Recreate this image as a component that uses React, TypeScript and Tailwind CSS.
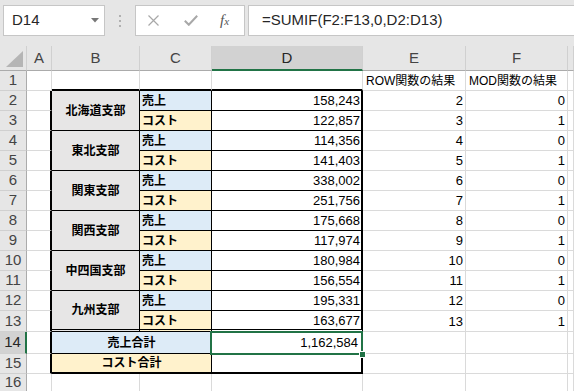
import { Fragment } from "react";

const branches = [
  { name: "北海道支部", sales: "158,243", cost: "122,857" },
  { name: "東北支部", sales: "114,356", cost: "141,403" },
  { name: "関東支部", sales: "338,002", cost: "251,756" },
  { name: "関西支部", sales: "175,668", cost: "117,974" },
  { name: "中四国支部", sales: "180,984", cost: "156,554" },
  { name: "九州支部", sales: "195,331", cost: "163,677" },
];

// plain sheet cells
const plain = "border-r border-b border-[#dadada]";
const num =
  "flex items-end justify-end border-r border-b border-[#dadada] pr-[2px] pb-[1px] text-[13px] leading-[16px]";
const label =
  "flex items-end overflow-hidden whitespace-nowrap border-r border-b border-[#dadada] pl-[3px] pb-[1px] text-[12px] leading-[16px]";

// table cells
const topEdge = "border-r border-b-2 border-r-[#dadada] border-b-black";
const leftEdge = "border-r-2 border-b border-r-black border-b-[#dadada]";
const branchCell =
  "row-span-2 flex items-center justify-center border-r border-b border-black bg-[#e7e6e6] text-[12px] font-bold";
const branchLast =
  "row-span-2 flex items-center justify-center border-r border-b-[3px] border-double border-black bg-[#e7e6e6] text-[12px] font-bold";
const salesCell =
  "flex items-end border-r border-b border-black bg-[#ddebf7] pl-[2px] pb-[1px] text-[12px] leading-[16px] font-bold";
const costCell =
  "flex items-end border-r border-b border-black bg-[#fff2cc] pl-[2px] pb-[1px] text-[12px] leading-[16px] font-bold";
const costLast =
  "flex items-end border-r border-b-[3px] border-double border-black bg-[#fff2cc] pl-[2px] text-[12px] leading-[16px] font-bold";
const valueCell =
  "flex items-end justify-end border-r-2 border-b border-black pr-[1px] pb-[1px] text-[13px] leading-[16px]";
const valueLast =
  "flex items-end justify-end border-r-2 border-b-[3px] border-double border-black pr-[1px] text-[13px] leading-[16px]";

const RowHead = ({ n, active }: { n: number; active?: boolean }) =>
  active ? (
    <div className="flex items-center justify-center border-r-2 border-b border-r-[#217346] border-b-[#d0d0d0] bg-[#d2d2d2] text-[15px] text-[#262626]">
      {n}
    </div>
  ) : (
    <div className="flex items-center justify-center border-r border-b border-r-[#ababab] border-b-[#d0d0d0] bg-[#e6e6e6] text-[15px] text-[#444]">
      {n}
    </div>
  );

const Toolbar = () => (
  <div className="flex h-[46px] items-start bg-[#e6e6e6] pt-[5px]">
    <div className="ml-[3px] flex h-[31px] w-[102px] items-center justify-between border border-[#c6c6c6] bg-white pl-[8px] pr-[5px] text-[15px] text-[#262626]">
      D14
      <svg width="8" height="5" viewBox="0 0 8 5">
        <polygon points="0,0 8,0 4,4.5" fill="#777" />
      </svg>
    </div>
    <div className="flex h-[31px] w-[30px] flex-col items-center justify-center gap-[3px]">
      <span className="h-[2px] w-[2px] bg-[#b0b0b0]" />
      <span className="h-[2px] w-[2px] bg-[#b0b0b0]" />
      <span className="h-[2px] w-[2px] bg-[#b0b0b0]" />
    </div>
    <div className="flex h-[31px] w-[110px] items-center border border-[#c6c6c6] bg-white pl-[12px]">
      <svg width="11" height="11" viewBox="0 0 11 11">
        <path d="M0.5 0.5 L10.5 10.5 M10.5 0.5 L0.5 10.5" stroke="#a8a8a8" strokeWidth="1.2" />
      </svg>
      <svg width="14" height="11" viewBox="0 0 14 11" className="ml-[25px]">
        <path d="M0.8 5.8 L4.8 9.8 L13.2 0.8" stroke="#a8a8a8" strokeWidth="2" fill="none" />
      </svg>
      <span className="ml-[22px] font-['Liberation_Serif',serif] text-[15px] italic leading-none text-[#555]">
        f<span className="text-[11px]">x</span>
      </span>
    </div>
    <div className="ml-[3px] flex h-[31px] flex-1 items-center border border-r-0 border-[#c6c6c6] bg-white pl-[13px] text-[15px] text-[#262626]">
      =SUMIF(F2:F13,0,D2:D13)
    </div>
  </div>
);

export default function App() {
  return (
    <div className="h-[391px] w-[574px] overflow-hidden bg-white font-['Liberation_Sans','Noto_Sans_CJK_JP',sans-serif] text-black">
      <Toolbar />
      <div className="grid grid-cols-[27px_25px_88px_72px_151px_103px_102px_1fr] grid-rows-[25px_repeat(12,20px)_21px_22px_20px_18px]">
        {/* column headers */}
        <div className="flex items-end justify-end border-r border-b border-r-[#d0d0d0] border-b-[#ababab] bg-[#e6e6e6] pr-[3px] pb-[3px]">
          <svg width="17" height="16" viewBox="0 0 17 16">
            <polygon points="17,0 17,16 0,16" fill="#b5b5b5" />
          </svg>
        </div>
        {["A", "B", "C"].map((c) => (
          <div
            key={c}
            className="flex items-center justify-center border-r border-b border-r-[#d0d0d0] border-b-[#ababab] bg-[#e6e6e6] text-[15px] text-[#444]"
          >
            {c}
          </div>
        ))}
        <div className="flex items-center justify-center border-r border-b-2 border-r-[#d0d0d0] border-b-[#217346] bg-[#d2d2d2] pt-[1px] text-[15px] text-[#262626]">
          D
        </div>
        {["E", "F", ""].map((c) => (
          <div
            key={c || "G"}
            className="flex items-center justify-center border-r border-b border-r-[#d0d0d0] border-b-[#ababab] bg-[#e6e6e6] text-[15px] text-[#444]"
          >
            {c}
          </div>
        ))}

        {/* row 1 */}
        <RowHead n={1} />
        <div className={plain} />
        <div className={topEdge} />
        <div className={topEdge} />
        <div className={topEdge} />
        <div className={label}>ROW関数の結果</div>
        <div className={label}>MOD関数の結果</div>
        <div className={plain} />

        {/* rows 2 - 13 */}
        {branches.map((b, i) => {
          const r = 2 + i * 2;
          const last = i === branches.length - 1;
          return (
            <Fragment key={b.name}>
              <RowHead n={r} />
              <div className={leftEdge} />
              <div className={last ? branchLast : branchCell}>{b.name}</div>
              <div className={salesCell}>売上</div>
              <div className={valueCell}>{b.sales}</div>
              <div className={num}>{r}</div>
              <div className={num}>0</div>
              <div className={plain} />

              <RowHead n={r + 1} />
              <div className={leftEdge} />
              <div className={last ? costLast : costCell}>コスト</div>
              <div className={last ? valueLast : valueCell}>{b.cost}</div>
              <div className={num}>{r + 1}</div>
              <div className={num}>1</div>
              <div className={plain} />
            </Fragment>
          );
        })}

        {/* row 14 */}
        <RowHead n={14} active />
        <div className={leftEdge} />
        <div className="col-span-2 flex items-center justify-center border-r border-b border-black bg-[#ddebf7] text-[12px] font-bold">
          売上合計
        </div>
        <div className="relative flex items-end justify-end border-r-2 border-b border-black pr-[3px] pb-[2px] text-[13px] leading-[16px]">
          1,162,584
          <div className="pointer-events-none absolute -top-px -right-[2px] -bottom-[2px] -left-[2px] z-10 border-2 border-[#217346]" />
          <div className="absolute -right-[5px] -bottom-[5px] z-20 h-[7px] w-[7px] border border-white bg-[#217346]" />
        </div>
        <div className={plain} />
        <div className={plain} />
        <div className={plain} />

        {/* row 15 */}
        <RowHead n={15} />
        <div className={leftEdge} />
        <div className="col-span-2 flex items-center justify-center border-r border-b-2 border-black bg-[#fff2cc] text-[12px] font-bold">
          コスト合計
        </div>
        <div className="border-r-2 border-b-2 border-black" />
        <div className={plain} />
        <div className={plain} />
        <div className={plain} />

        {/* row 16 */}
        <RowHead n={16} />
        <div className={plain} />
        <div className={plain} />
        <div className={plain} />
        <div className={plain} />
        <div className={plain} />
        <div className={plain} />
        <div className={plain} />
      </div>
    </div>
  );
}
